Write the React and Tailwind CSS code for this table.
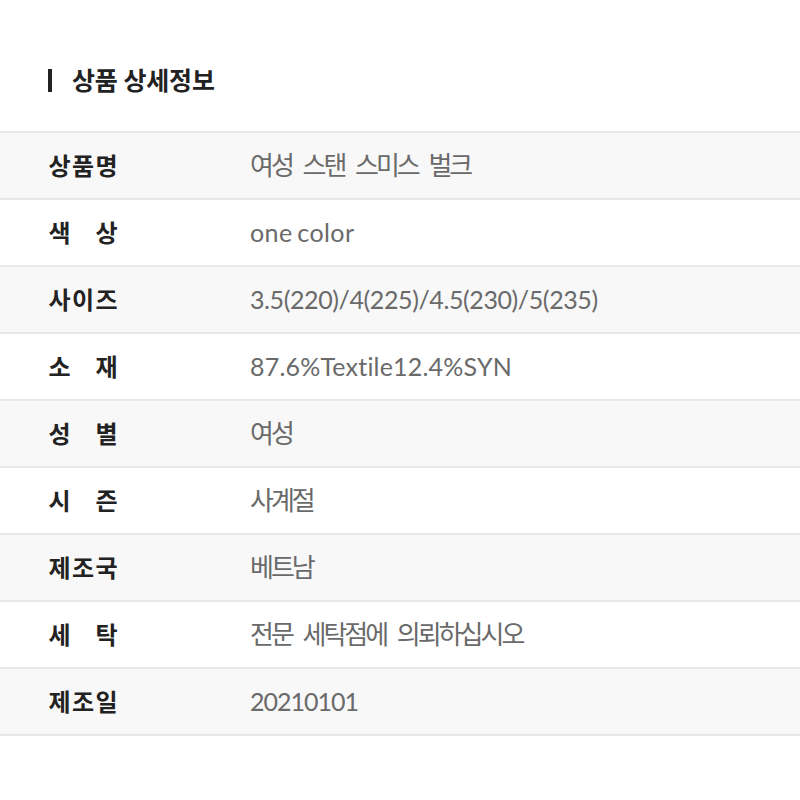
export default function App() {
  const rows = [
    ["상품명", "여성 스탠 스미스 벌크", "ko"],
    ["색상", "one color", "tracking-[0.4px] [word-spacing:-2px]"],
    ["사이즈", "3.5(220)/4(225)/4.5(230)/5(235)", "tracking-[-0.4px]"],
    ["소재", "87.6%Textile12.4%SYN", "tracking-[0.2px]"],
    ["성별", "여성", "ko"],
    ["시즌", "사계절", "ko"],
    ["제조국", "베트남", "ko"],
    ["세탁", "전문 세탁점에 의뢰하십시오", "ko"],
    ["제조일", "20210101", "tracking-[-1px]"],
  ];
  return (
    <div
      className="w-[800px] h-[800px] bg-white"
      style={{ fontFamily: 'Lato, "Noto Sans CJK KR", sans-serif' }}
    >
      <div className="flex items-center h-[131px] pt-[30px] pl-[48px]">
        <div className="w-[4px] h-[23px] bg-[#222]"></div>
        <div className="ml-[20px] text-[25px] font-bold text-[#222] tracking-[-0.2px]">상품 상세정보</div>
      </div>
      <div className="border-t-2 border-[#e8e8e8]">
        {rows.map(([k, v, t], i) => (
          <div
            key={k}
            className={`flex items-center h-[67px] border-b-2 border-[#e8e8e8] ${i % 2 === 0 ? "bg-[#f8f8f8]" : "bg-white"}`}
          >
            <div className="w-[250px] shrink-0 pl-[48px]">
              <div className="w-[70px] flex justify-between text-[24px] font-bold text-[#222]">
                {k.split("").map((c, j) => (
                  <span key={j} className="w-[23px] flex justify-center">{c}</span>
                ))}
              </div>
            </div>
            {t === "ko" ? (
              <div className="text-[26px] text-[#6a6a6a] tracking-[-3px] [word-spacing:7px]">{v}</div>
            ) : (
              <div className={`text-[25px] text-[#6a6a6a] ${t}`}>{v}</div>
            )}
          </div>
        ))}
      </div>
    </div>
  );
}
